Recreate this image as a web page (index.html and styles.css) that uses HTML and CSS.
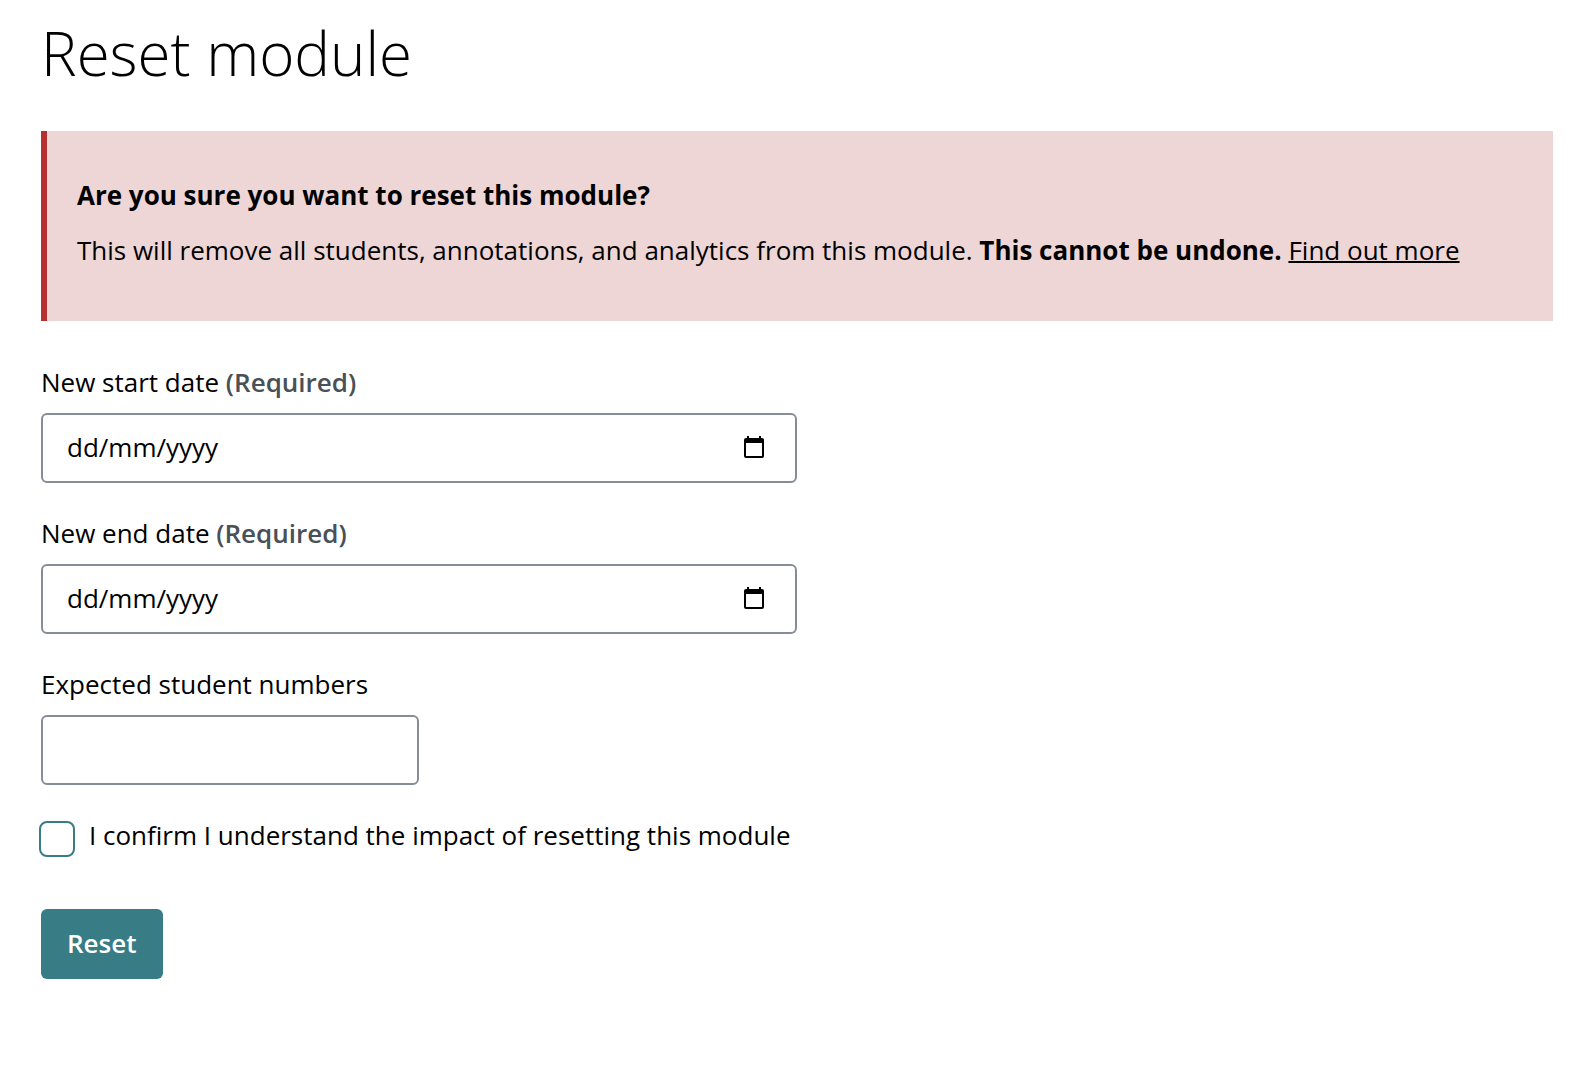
FILE: index.html
```html
<!DOCTYPE html>
<html lang="en-GB">
<head>
  <meta charset="UTF-8">
  <title>Reset module</title>
  <link rel="stylesheet" href="styles.css">
</head>
<body>
  <h1>Reset module</h1>

  <div class="alert">
    <p><strong>Are you sure you want to reset this module?</strong></p>
    <p>This will remove all students, annotations, and analytics from this module. <strong>This cannot be undone.</strong> <a href="#">Find out more</a></p>
  </div>

  <form>
    <div class="field">
      <label for="startDate">New start date <span class="required">(Required)</span></label>
      <div class="date-box">
        <input type="text" id="startDate" placeholder="dd/mm/yyyy" required>
        <button type="button" class="picker" aria-label="Choose start date">
          <svg width="20" height="22" viewBox="0 0 20 22">
            <path fill-rule="evenodd" d="M3 0h2v2h10V0h2v2h1a2 2 0 0 1 2 2v16a2 2 0 0 1-2 2H2a2 2 0 0 1-2-2V4a2 2 0 0 1 2-2h1zM2 7v13h16V7z"/>
          </svg>
        </button>
      </div>
    </div>

    <div class="field">
      <label for="endDate">New end date <span class="required">(Required)</span></label>
      <div class="date-box">
        <input type="text" id="endDate" placeholder="dd/mm/yyyy" required>
        <button type="button" class="picker" aria-label="Choose end date">
          <svg width="20" height="22" viewBox="0 0 20 22">
            <path fill-rule="evenodd" d="M3 0h2v2h10V0h2v2h1a2 2 0 0 1 2 2v16a2 2 0 0 1-2 2H2a2 2 0 0 1-2-2V4a2 2 0 0 1 2-2h1zM2 7v13h16V7z"/>
          </svg>
        </button>
      </div>
    </div>

    <div class="field">
      <label for="students">Expected student numbers</label>
      <input type="text" id="students" class="short" inputmode="numeric">
    </div>

    <div class="confirm">
      <input type="checkbox" id="confirm">
      <label for="confirm">I confirm I understand the impact of resetting this module</label>
    </div>

    <button type="submit" class="submit">Reset</button>
  </form>
</body>
</html>
```

FILE: styles.css
```css
* {
  box-sizing: border-box;
}

body {
  margin: 0;
  padding: 17px 37px 40px 41px;
  font-family: "Open Sans", sans-serif;
  font-size: 26px;
  line-height: 39px;
  color: #000;
  background: #fff;
}

h1 {
  margin: 0 0 42px;
  font-size: 60px;
  font-weight: 300;
  line-height: 72px;
}

.alert {
  margin-bottom: 42px;
  padding: 45px 30px 51px;
  border-left: 6px solid #b53030;
  background: #eed6d6;
}

.alert p {
  margin: 0;
}

.alert p + p {
  margin-top: 16px;
}

.alert a {
  color: inherit;
  text-decoration-thickness: 2px;
}

.field {
  margin-bottom: 31px;
}

.field label {
  display: block;
  margin-bottom: 11px;
}

.required {
  font-weight: 600;
  color: #495057;
}

.field input {
  display: block;
  width: 100%;
  height: 70px;
  padding: 0 24px 2px;
  border: 2px solid #868c98;
  border-radius: 6px;
  font: inherit;
  color: #000;
  background: #fff;
}

.field input::placeholder {
  color: #000;
  opacity: 1;
}

.field .short {
  width: 25%;
}

.date-box {
  position: relative;
  width: 50%;
}

/* calendar button sits over the right end of the text box */
.picker {
  position: absolute;
  top: 0;
  right: 23px;
  display: flex;
  align-items: center;
  height: 100%;
  padding: 0 10px 2px;
  border: 0;
  background: none;
}

.confirm {
  display: flex;
  gap: 14px;
  margin: 0 0 52px -2px;
}

.confirm input {
  appearance: none;
  flex: none;
  width: 36px;
  height: 36px;
  margin: 5px 0 0;
  border: 2px solid #387c86;
  border-radius: 8px;
  background: #fff;
}

.confirm input:checked {
  background: #387c86;
}

.submit {
  height: 70px;
  padding: 0 26px 2px;
  border: 0;
  border-radius: 6px;
  font: inherit;
  font-weight: 600;
  color: #fff;
  background: #387c86;
}
```
